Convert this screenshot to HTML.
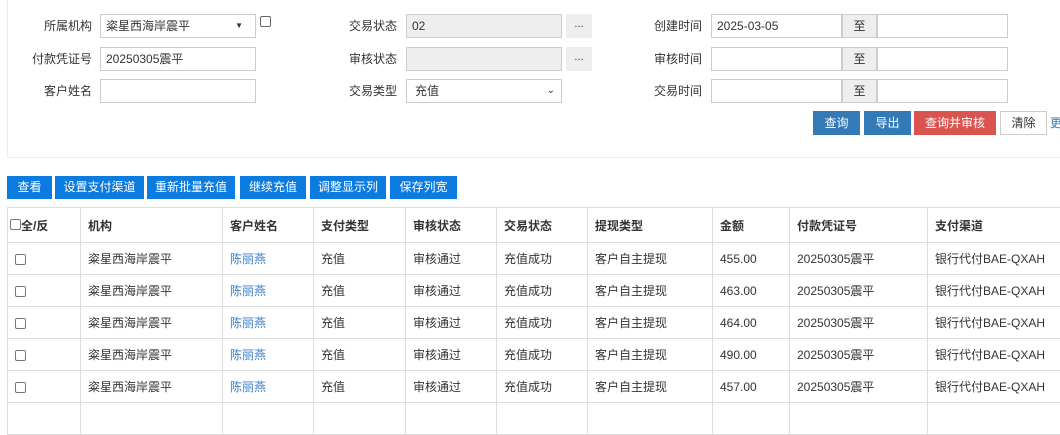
<!DOCTYPE html>
<html><head><meta charset="utf-8"><style>
*{box-sizing:border-box;margin:0;padding:0}
body{width:1060px;height:405px;overflow:hidden;background:#fff;font-family:"Liberation Sans","Noto Sans CJK SC",sans-serif;font-size:12px;color:#333;position:relative}
.a{position:absolute}
.lbl{position:absolute;text-align:right;width:90px;line-height:24px}
.inp{position:absolute;height:24px;border:1px solid #ccc;background:#fff;line-height:22px;padding-left:5px}
.dis{background:#eee}
.dots{position:absolute;width:26px;height:24px;background:#eee;text-align:center;line-height:20px;font-size:11px}
.zhi{position:absolute;width:35px;height:24px;background:#eee;border:1px solid #ccc;text-align:center;line-height:22px}
.btn{position:absolute;height:24px;line-height:24px;text-align:center;color:#fff}
.tb{position:absolute;top:176px;height:23px;line-height:23px;background:#0b7be0;color:#fff;text-align:center}
table{position:absolute;left:7px;top:207px;border-collapse:collapse;table-layout:fixed;width:1080px}
td,th{border:1px solid #ddd;height:32px;padding-left:7px;text-align:left;white-space:nowrap;overflow:hidden}
th{height:35px;font-weight:bold}
.cb{display:inline-block;width:11px;height:11px;border:1px solid #777;border-radius:2px;vertical-align:middle}
a{color:#3a7fc8}
</style></head><body>
<div class="a" style="left:7px;top:-2px;width:1060px;height:160px;border:1px solid #e8eef4;border-top:none"></div>

<div class="lbl" style="left:2px;top:14px">所属机构</div>
<div class="inp" style="left:100px;top:14px;width:156px">粢星西海岸震平<span style="position:absolute;right:12px;font-size:8px">▼</span></div>
<div class="a" style="left:260px;top:16px;width:11px;height:11px;border:1px solid #666;border-radius:2px"></div>
<div class="lbl" style="left:2px;top:47px">付款凭证号</div>
<div class="inp" style="left:100px;top:47px;width:156px">20250305震平</div>
<div class="lbl" style="left:2px;top:79px">客户姓名</div>
<div class="inp" style="left:100px;top:79px;width:156px"></div>

<div class="lbl" style="left:307px;top:14px">交易状态</div>
<div class="inp dis" style="left:406px;top:14px;width:156px">02</div>
<div class="dots" style="left:566px;top:14px">...</div>
<div class="lbl" style="left:307px;top:47px">审核状态</div>
<div class="inp dis" style="left:406px;top:47px;width:156px"></div>
<div class="dots" style="left:566px;top:47px">...</div>
<div class="lbl" style="left:307px;top:79px">交易类型</div>
<div class="inp" style="left:406px;top:79px;width:156px;padding-left:8px">充值<span style="position:absolute;right:6px;top:0;font-size:10px">&#8964;</span></div>

<div class="lbl" style="left:612px;top:14px">创建时间</div>
<div class="inp" style="left:711px;top:14px;width:131px">2025-03-05</div>
<div class="zhi" style="left:842px;top:14px">至</div>
<div class="inp" style="left:877px;top:14px;width:131px"></div>
<div class="lbl" style="left:612px;top:47px">审核时间</div>
<div class="inp" style="left:711px;top:47px;width:131px"></div>
<div class="zhi" style="left:842px;top:47px">至</div>
<div class="inp" style="left:877px;top:47px;width:131px"></div>
<div class="lbl" style="left:612px;top:79px">交易时间</div>
<div class="inp" style="left:711px;top:79px;width:131px"></div>
<div class="zhi" style="left:842px;top:79px">至</div>
<div class="inp" style="left:877px;top:79px;width:131px"></div>

<div class="btn" style="left:813px;top:111px;width:47px;background:#337ab7">查询</div>
<div class="btn" style="left:864px;top:111px;width:47px;background:#337ab7">导出</div>
<div class="btn" style="left:914px;top:111px;width:82px;background:#d9534f">查询并审核</div>
<div class="btn" style="left:1000px;top:111px;width:47px;border:1px solid #ccc;color:#333;line-height:22px">清除</div>
<div class="a" style="left:1050px;top:111px;line-height:24px;color:#337ab7">更</div>

<div class="tb" style="left:7px;width:45px">查看</div>
<div class="tb" style="left:55px;width:89px">设置支付渠道</div>
<div class="tb" style="left:147px;width:88px">重新批量充值</div>
<div class="tb" style="left:240px;width:66px">继续充值</div>
<div class="tb" style="left:310px;width:76px">调整显示列</div>
<div class="tb" style="left:390px;width:67px">保存列宽</div>

<table>
<colgroup><col style="width:73px"><col style="width:142px"><col style="width:91px"><col style="width:92px"><col style="width:91px"><col style="width:91px"><col style="width:125px"><col style="width:77px"><col style="width:138px"><col style="width:160px"></colgroup>
<tr><th style="padding-left:2px"><span class="cb" style="vertical-align:top;margin-top:2px"></span>全/反</th><th>机构</th><th>客户姓名</th><th>支付类型</th><th>审核状态</th><th>交易状态</th><th>提现类型</th><th>金额</th><th>付款凭证号</th><th>支付渠道</th></tr>
<tr><td style="padding-left:7px"><span class="cb"></span></td><td>粢星西海岸震平</td><td><a>陈丽燕</a></td><td>充值</td><td>审核通过</td><td>充值成功</td><td>客户自主提现</td><td>455.00</td><td>20250305震平</td><td>银行代付BAE-QXAH</td></tr>
<tr><td style="padding-left:7px"><span class="cb"></span></td><td>粢星西海岸震平</td><td><a>陈丽燕</a></td><td>充值</td><td>审核通过</td><td>充值成功</td><td>客户自主提现</td><td>463.00</td><td>20250305震平</td><td>银行代付BAE-QXAH</td></tr>
<tr><td style="padding-left:7px"><span class="cb"></span></td><td>粢星西海岸震平</td><td><a>陈丽燕</a></td><td>充值</td><td>审核通过</td><td>充值成功</td><td>客户自主提现</td><td>464.00</td><td>20250305震平</td><td>银行代付BAE-QXAH</td></tr>
<tr><td style="padding-left:7px"><span class="cb"></span></td><td>粢星西海岸震平</td><td><a>陈丽燕</a></td><td>充值</td><td>审核通过</td><td>充值成功</td><td>客户自主提现</td><td>490.00</td><td>20250305震平</td><td>银行代付BAE-QXAH</td></tr>
<tr><td style="padding-left:7px"><span class="cb"></span></td><td>粢星西海岸震平</td><td><a>陈丽燕</a></td><td>充值</td><td>审核通过</td><td>充值成功</td><td>客户自主提现</td><td>457.00</td><td>20250305震平</td><td>银行代付BAE-QXAH</td></tr>
<tr><td></td><td></td><td></td><td></td><td></td><td></td><td></td><td></td><td></td><td></td></tr>
</table>
</body></html>
